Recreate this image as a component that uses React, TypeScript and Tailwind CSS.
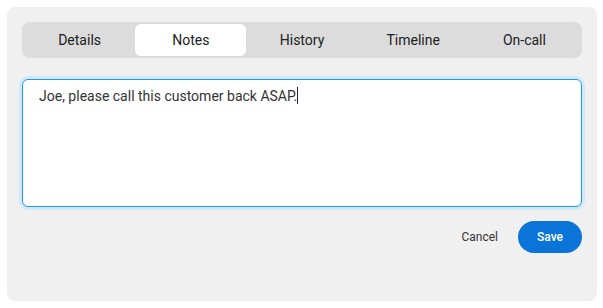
import { useState } from "react";

const TABS = ["Details", "Notes", "History", "Timeline", "On-call"];

export default function App() {
  const [active, setActive] = useState("Notes");

  return (
    <main className="min-h-screen bg-white p-[7px] font-['Roboto',sans-serif]">
      <div className="w-[590px] h-[294px] rounded-lg bg-[#f0f0f0] p-[15px]">
        <div className="flex rounded-lg bg-[#dcdcdc] p-[2px]">
          {TABS.map((tab) => (
            <button
              key={tab}
              onClick={() => setActive(tab)}
              className={`flex-1 h-[32px] rounded-md text-[14px] text-[#212121] ${tab === active ? "bg-white" : ""}`}
            >
              {tab}
            </button>
          ))}
        </div>

        <div className="mt-[21px] h-[128px] rounded-md border border-[#1a9be8] bg-white px-[16px] py-[6px] shadow-[0_0_0_3px_#d3e9fb] text-[14px] leading-[20px] text-[#333]">
          Joe, please call this customer back ASAP.
          <span className="inline-block w-px h-[17px] -mb-[3px] bg-[#222]" />
        </div>

        <div className="mt-[14px] flex justify-end items-center gap-[4px]">
          <button className="h-[32px] px-[16px] rounded-full text-[12px] text-[#333]">Cancel</button>
          <button className="h-[32px] w-[64px] rounded-full bg-[#0b74d9] text-[12px] font-medium text-white">Save</button>
        </div>
      </div>
    </main>
  );
}
